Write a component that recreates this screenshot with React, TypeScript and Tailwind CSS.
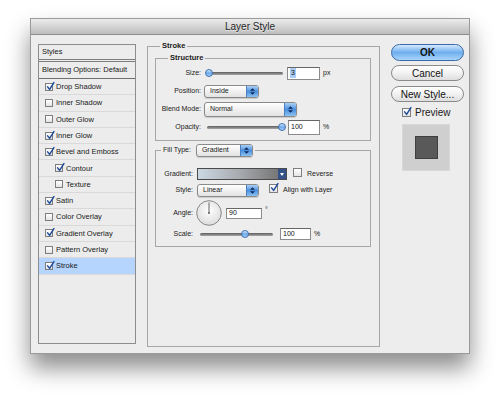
import React from 'react';

const font = "font-['Liberation_Sans',Arial,sans-serif]";

const Check = ({ checked, big }: { checked?: boolean; big?: boolean }) => (
  <span
    className={`relative inline-block shrink-0 border border-[#7e7e7e] bg-gradient-to-b from-white to-[#e4e4e4] ${
      big ? 'h-[9px] w-[9px]' : 'h-[8px] w-[8px]'
    }`}
  >
    {checked && (
      <svg viewBox="0 0 10 10" className="absolute -top-[2px] left-0 h-[9px] w-[9px] overflow-visible">
        <path d="M1.8 5.4 L4 8.2 L8.8 0.6" fill="none" stroke="#1d4a97" strokeWidth="1.6" strokeLinecap="round" strokeLinejoin="round" />
      </svg>
    )}
  </span>
);

const Select = ({ label, w, h }: { label: string; w: string; h: string }) => (
  <div className={`flex ${w} ${h} items-stretch overflow-hidden rounded-[3px] border border-[#8a8a8a] bg-gradient-to-b from-white to-[#e2e2e2] shadow-[0_1px_1px_rgba(0,0,0,0.15)]`}>
    <span className="flex flex-1 items-center pl-[5px] text-[7px] text-[#1a1a1a]">{label}</span>
    <span className="flex w-[12px] flex-col items-center justify-center gap-[1px] border-l border-[#4d7fbf] bg-gradient-to-b from-[#a9d0f5] via-[#4b90df] to-[#8cc2f2]">
      <svg viewBox="0 0 6 3" className="h-[3px] w-[5px]"><path d="M0 3 L3 0 L6 3 Z" fill="#10285a" /></svg>
      <svg viewBox="0 0 6 3" className="h-[3px] w-[5px]"><path d="M0 0 L3 3 L6 0 Z" fill="#10285a" /></svg>
    </span>
  </div>
);

const Slider = ({ w, pos }: { w: string; pos: number }) => (
  <div className={`relative flex h-full ${w} items-center`}>
    <div className="h-[3px] w-full rounded-full bg-gradient-to-b from-[#5e5e5e] to-[#a8a8a8]" />
    <span
      className="absolute top-1/2 h-[8px] w-[8px] -translate-x-1/2 -translate-y-1/2 rounded-full border border-[#3e6fae] bg-gradient-to-b from-[#d8ecff] via-[#6aa8ea] to-[#a9d3fa]"
      style={{ left: `${pos}%` }}
    />
  </div>
);

const Field = ({ value, w, h, selected }: { value: string; w: string; h: string; selected?: boolean }) => (
  <div className={`flex ${w} ${h} items-center border border-[#8c8c8c] border-t-[#666] bg-white pl-[2px] text-[7px] text-[#111]`}>
    {selected ? <span className="bg-[#a9cdf4] px-[1px]">{value}</span> : value}
  </div>
);

const styleItems: { name: string; checked: boolean; indent?: boolean }[] = [
  { name: 'Drop Shadow', checked: true },
  { name: 'Inner Shadow', checked: false },
  { name: 'Outer Glow', checked: false },
  { name: 'Inner Glow', checked: true },
  { name: 'Bevel and Emboss', checked: true },
  { name: 'Contour', checked: true, indent: true },
  { name: 'Texture', checked: false, indent: true },
  { name: 'Satin', checked: true },
  { name: 'Color Overlay', checked: false },
  { name: 'Gradient Overlay', checked: true },
  { name: 'Pattern Overlay', checked: false },
  { name: 'Stroke', checked: true },
];

export default function App() {
  return (
    <div className={`h-[395px] w-[500px] bg-white pl-[30px] pt-[18px] ${font} text-[#1a1a1a]`}>
      <div className="flex h-[336px] w-[440px] flex-col border border-[#9a9a9a] bg-[#ededed] shadow-[0_14px_22px_rgba(0,0,0,0.45)]">
        {/* title bar */}
        <div className="flex h-[16px] items-center justify-center border-b border-[#8c8c8c] bg-gradient-to-b from-[#ececec] to-[#bdbdbd] text-[10px] text-[#1e1e1e] [text-shadow:0_1px_0_rgba(255,255,255,0.6)]">
          Layer Style
        </div>

        <div className="flex flex-1 items-start pl-[7px]">
          {/* styles list */}
          <div className="mt-[9px] flex h-[300px] w-[98px] flex-col border border-[#8d8d8d] bg-[#ececec] text-[7.5px]">
            <div className="flex h-[17px] items-center border-b-[3px] border-double border-[#7d7d7d] pl-[3px]">Styles</div>
            <div className="flex h-[17px] items-center border-b border-[#6f6f6f] pl-[3px]">Blending Options: Default</div>
            {styleItems.map((it) => (
              <div
                key={it.name}
                className={`flex h-[16.3px] items-center gap-[3px] border-b border-[#d9d9d9] ${it.indent ? 'pl-[16px]' : 'pl-[6px]'} ${
                  it.name === 'Stroke' ? 'bg-[#b5d5ff]' : ''
                }`}
              >
                <Check checked={it.checked} />
                <span>{it.name}</span>
              </div>
            ))}
          </div>

          {/* main panel */}
          <fieldset className="ml-[11px] mt-[6px] h-[306px] w-[233px] border border-[#a6a6a6] p-0">
            <legend className="ml-[12px] px-[2px] text-[7.5px] font-bold leading-[10px]">Stroke</legend>
            <div className="px-[7px] pt-[2px]">
              {/* structure */}
              <fieldset className="w-[216px] border border-[#a6a6a6] p-0">
                <legend className="ml-[12px] px-[2px] text-[7.5px] font-bold leading-[10px]">Structure</legend>
                <div className="flex flex-col gap-[2px] pb-[5px] pt-[2px] text-[7px]">
                  <div className="flex h-[16px] items-center">
                    <span className="w-[45px] text-right">Size:</span>
                    <div className="ml-[6px] h-full"><Slider w="w-[76px]" pos={3} /></div>
                    <div className="ml-[4px]"><Field value="3" w="w-[33px]" h="h-[13px]" selected /></div>
                    <span className="ml-[3px]">px</span>
                  </div>
                  <div className="flex h-[16px] items-center">
                    <span className="w-[45px] text-right">Position:</span>
                    <div className="ml-[3px]"><Select label="Inside" w="w-[55px]" h="h-[13px]" /></div>
                  </div>
                  <div className="flex h-[16px] items-center">
                    <span className="w-[45px] text-right">Blend Mode:</span>
                    <div className="ml-[3px]"><Select label="Normal" w="w-[93px]" h="h-[15px]" /></div>
                  </div>
                  <div className="flex h-[16px] items-center">
                    <span className="w-[45px] text-right">Opacity:</span>
                    <div className="ml-[6px] h-full"><Slider w="w-[77px]" pos={97} /></div>
                    <div className="ml-[4px]"><Field value="100" w="w-[32px]" h="h-[15px]" /></div>
                    <span className="ml-[3px]">%</span>
                  </div>
                </div>
              </fieldset>

              {/* fill type */}
              <fieldset className="mt-[3px] w-[216px] border border-[#a6a6a6] p-0">
                <legend className="ml-[5px] flex items-center px-[2px] text-[7px]">
                  <span>Fill Type:</span>
                  <div className="ml-[5px]"><Select label="Gradient" w="w-[57px]" h="h-[13px]" /></div>
                </legend>
                <div className="flex flex-col pb-[6px] pt-[11px] text-[7px]">
                  <div className="flex h-[12px] items-center">
                    <span className="w-[37px] text-right">Gradient:</span>
                    <div className="ml-[4px] flex h-[12px] w-[90px] border border-[#4a4a4a]">
                      <div className="flex-1 bg-gradient-to-r from-[#cbd8e4] via-[#a9acb1] to-[#777]" />
                      <div className="flex w-[8px] items-center justify-center bg-[#34528a]">
                        <svg viewBox="0 0 4 3" className="h-[3px] w-[4px]"><path d="M0 0 L4 0 L2 3 Z" fill="#fff" /></svg>
                      </div>
                    </div>
                    <span className="ml-[6px]"><Check big /></span>
                    <span className="ml-[5px]">Reverse</span>
                  </div>
                  <div className="mt-[4px] flex h-[13px] items-center">
                    <span className="w-[37px] text-right">Style:</span>
                    <div className="ml-[4px]"><Select label="Linear" w="w-[62px]" h="h-[13px]" /></div>
                    <span className="ml-[10px]"><Check big checked /></span>
                    <span className="ml-[5px]">Align with Layer</span>
                  </div>
                  <div className="mt-[3px] flex h-[26px] items-center">
                    <span className="w-[37px] text-right">Angle:</span>
                    <svg viewBox="0 0 26 26" className="ml-[3px] h-[26px] w-[26px]">
                      <defs>
                        <radialGradient id="dial" cx="50%" cy="40%" r="60%">
                          <stop offset="0%" stopColor="#ffffff" />
                          <stop offset="100%" stopColor="#dcdcdc" />
                        </radialGradient>
                      </defs>
                      <circle cx="13" cy="13" r="12.3" fill="url(#dial)" stroke="#7d7d7d" strokeWidth="0.9" />
                      <line x1="13" y1="13" x2="13" y2="2.5" stroke="#555" strokeWidth="0.9" />
                      <circle cx="13" cy="13" r="0.9" fill="#555" />
                    </svg>
                    <div className="ml-[4px]"><Field value="90" w="w-[36px]" h="h-[11px]" /></div>
                    <span className="ml-[3px] self-start pt-[5px]">°</span>
                  </div>
                  <div className="mt-[2px] flex h-[12px] items-center">
                    <span className="w-[37px] text-right">Scale:</span>
                    <div className="ml-[7px] h-full"><Slider w="w-[73px]" pos={62} /></div>
                    <div className="ml-[7px]"><Field value="100" w="w-[31px]" h="h-[12px]" /></div>
                    <span className="ml-[3px]">%</span>
                  </div>
                </div>
              </fieldset>
            </div>
          </fieldset>

          {/* buttons */}
          <div className="ml-[11px] mt-[9px] flex w-[73px] flex-col text-[10px]">
            <button className="flex h-[17px] items-center justify-center rounded-full border border-[#3b6aa6] bg-gradient-to-b from-[#d4e9fd] via-[#6eaeee] to-[#a8d5fb] font-bold text-[#111]">
              OK
            </button>
            <button className="mt-[4px] flex h-[16px] items-center justify-center rounded-full border border-[#8a8a8a] bg-gradient-to-b from-white via-[#f2f2f2] to-[#dedede] text-[#111]">
              Cancel
            </button>
            <button className="mt-[5px] flex h-[16px] items-center justify-center rounded-full border border-[#8a8a8a] bg-gradient-to-b from-white via-[#f2f2f2] to-[#dedede] text-[#111]">
              New Style...
            </button>
            <div className="mt-[5px] flex h-[11px] items-center pl-[11px]">
              <Check big checked />
              <span className="ml-[4px]">Preview</span>
            </div>
            <div className="ml-[11px] mt-[6px] flex h-[47px] w-[48px] items-center justify-center border border-[#d8d8d8] bg-[#cfcfcf]">
              <div className="h-[23px] w-[23px] border border-[#3f3f3f] bg-[#595959]" />
            </div>
          </div>
        </div>
      </div>
    </div>
  );
}
